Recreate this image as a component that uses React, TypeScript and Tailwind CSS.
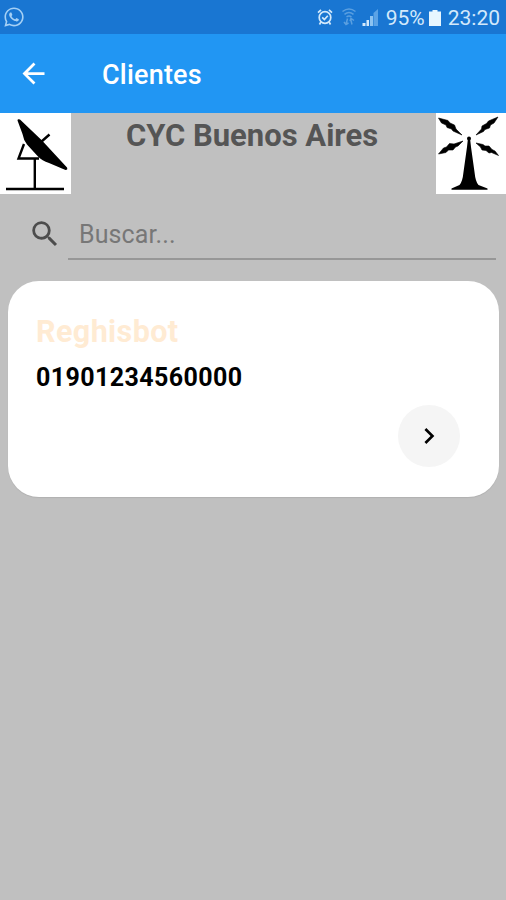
import { FaWhatsapp } from "react-icons/fa";
import { MdArrowBack, MdChevronRight, MdSearch } from "react-icons/md";

const clients = [{ name: "Reghisbot", account: "01901234560000" }];

function AlarmIcon() {
  return (
    <svg width="16" height="18" viewBox="0 0 16 18" fill="none" stroke="currentColor" strokeWidth="1.7">
      <circle cx="8" cy="9.5" r="5.8" />
      <path d="M1 4.7 4 1.9M15 4.7 12 1.9M3.8 14.1 2.5 16.5M12.2 14.1l1.3 2.4M5.2 9.3l2.2 2.2 3.4-3.8" />
    </svg>
  );
}

function WifiIcon() {
  return (
    <svg width="14" height="18" viewBox="0 0 14 18" fill="none" stroke="currentColor" strokeWidth="1.5">
      <path d="M.5 3.5q6.5-5 13 0M2.500 6.300q4.500-3.500 9 0M4.500 9q2.500-2 5 0M5.500 10.500 4 16.500M2 14l2 2.500 2.500-1.500M8.500 10.500l1.500 6M8 13l1-2.500 3 2" />
    </svg>
  );
}

function SignalIcon() {
  return (
    <svg width="17" height="17" viewBox="0 0 17 17">
      <path d="M.5 14h3v3h-3zM4.500 11H7v6H4.500z" fill="#d3e9fb" />
      <path d="M8 7h3v10H8z" fill="#8cc3f1" />
      <path d="M11.500 4 16 0v17h-4.500z" fill="#5ba3e6" />
    </svg>
  );
}

function DishLogo() {
  return (
    <svg width="71" height="81" viewBox="0 0 71 81" className="bg-white">
      <path d="M17.500 7.500Q17.500 5.500 20 6.500L42 27.500 67 54.500Q68 57 65.500 57L49 50Q42 47.500 38 43.500L27 31.500Q23.500 27 22.500 21Z" />
      <path
        d="M41 29 49.500 21.500M24 31 18.500 45.500H39M34.800 45v31M6 76h58"
        fill="none"
        stroke="black"
        strokeWidth="2.400"
      />
    </svg>
  );
}

function TowerLogo() {
  return (
    <svg width="70" height="81" viewBox="0 0 70 81" className="bg-white">
      <circle cx="33" cy="25.500" r="2" />
      <path d="M32 25h2L35 34 38.500 59Q39.500 69 42.500 72L51.500 75.500V76.800H15.500V75.500L23.500 72Q26.500 69 27.500 59L31 34Z" />
      <g stroke="black" strokeWidth="0.600">
        <path d="M2.500 5 12 7.500 14 10 18.500 12 20 16 26 22 17 18 15.500 16 11 14.500 10 12 5.500 10Z" />
        <path d="M62 4 52.500 8 50.500 10.500 46 13 45.500 16 40 22 47.500 18.500 49 16.500 53.500 15 54.500 12 58 10Z" />
        <path d="M2.500 41 7.500 35 10.500 34 13.500 30.500 18 31 27 28 22 33 19.500 34 17 37 12.500 37 10 39.500Z" />
        <path d="M40 30 47 31.500 49 33 53 33 56 36.500 59 38 62.500 42.500 55.500 39.500 53 40 50 37.500 46 37 44.500 34Z" />
      </g>
    </svg>
  );
}

export default function App() {
  return (
    <div className="flex h-[900px] w-[506px] flex-col overflow-hidden bg-[#c0c0c0] font-['Roboto',sans-serif]">
      {/* Status bar */}
      <div className="flex h-[34px] shrink-0 items-center justify-between bg-[#1976d2] pl-[3px] pr-[6px] text-[#d3e9fb]">
        <FaWhatsapp size={22} className="text-[#a5d0f5]" />
        <div className="flex items-center">
          <AlarmIcon />
          <span className="ml-[9px] text-[#5a9fe0]">
            <WifiIcon />
          </span>
          <span className="ml-[6px]">
            <SignalIcon />
          </span>
          <span className="ml-[7px] mt-[2px] text-[21px] leading-none">95%</span>
          <svg width="12" height="16" viewBox="0 0 12 16" fill="#e6f6ff" className="ml-[4px] mt-[2px]">
            <path d="M3.500 0h5v1.500H12V16H0V1.500h3.500z" />
          </svg>
          <span className="ml-[7px] mt-[2px] text-[21px] leading-none">23:20</span>
        </div>
      </div>

      {/* App bar */}
      <header className="flex h-[79px] shrink-0 items-center bg-[#2196f3] pl-[17px] text-white">
        <button aria-label="Volver">
          <MdArrowBack size={33} />
        </button>
        <h1 className="ml-[52px] mt-[4px] text-[27px] font-medium leading-none tracking-[0.2px]">Clientes</h1>
      </header>

      <div className="flex h-[81px] shrink-0 items-start justify-between">
        <DishLogo />
        <h2 className="-ml-[3px] mt-[7px] text-[31px] font-bold leading-none text-[#555]">CYC Buenos Aires</h2>
        <TowerLogo />
      </div>

      {/* Search */}
      <div className="flex h-[67px] shrink-0 items-start pl-[28px] pr-[10px] pt-[22px]">
        <MdSearch size={34} className="mt-px text-[#4d4d4d]" />
        <div className="ml-[6px] h-[44px] flex-1 border-b-2 border-[#979797] pl-[11px] text-[25px] leading-[37px] tracking-[0.1px] text-[#777]">
          Buscar...
        </div>
      </div>

      {/* Client cards */}
      <main className="mt-[20px] flex flex-col gap-4 pl-[8px] pr-[7px]">
        {clients.map((client) => (
          <div
            key={client.account}
            className="flex h-[216px] flex-col rounded-[31px] bg-white pl-[28px] pr-[39px] pt-[35px] shadow-[0_1px_1px_rgba(0,0,0,0.08)]"
          >
            <p className="text-[30.500px] font-bold leading-[32px] tracking-[0.4px] text-[#ffebd3]">{client.name}</p>
            <p className="mt-[16px] text-[25px] font-bold leading-[28px] tracking-[0.4px] text-black">
              {client.account}
            </p>
            <button
              aria-label="Ver cliente"
              className="mt-[13px] flex size-[62px] items-center justify-center self-end rounded-full bg-[#f5f5f5] text-black"
            >
              <MdChevronRight size={32} />
            </button>
          </div>
        ))}
      </main>
    </div>
  );
}
